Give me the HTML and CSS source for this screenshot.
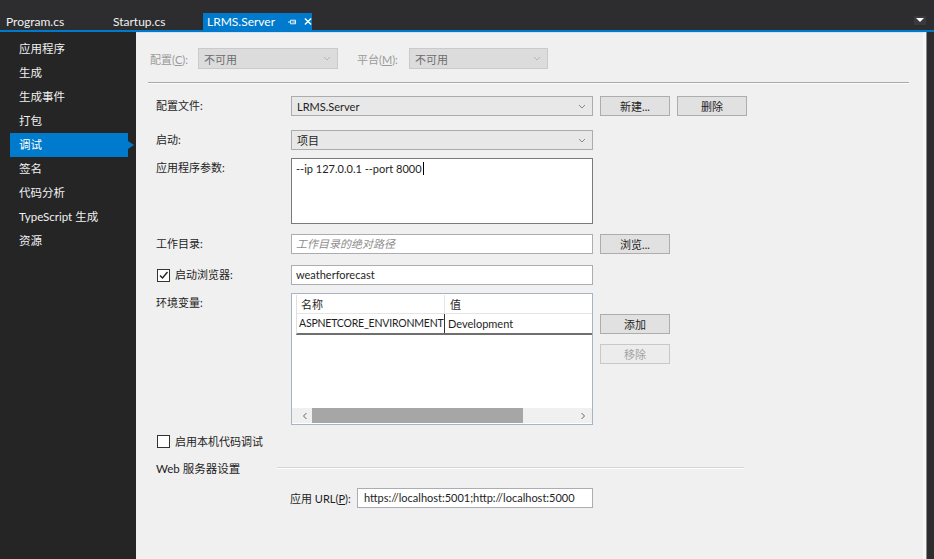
FILE: index.html
```html
<!DOCTYPE html>
<html lang="zh-CN">
<head>
  <meta charset="UTF-8" />
  <title>LRMS.Server</title>
  <link rel="stylesheet" href="styles.css">
</head>
<body>
  <div class="tabbar">
    <div class="tab tab-first">Program.cs</div>
    <div class="tab tab-second">Startup.cs</div>
    <div class="tab active">
      <span>LRMS.Server</span>
      <svg class="pin" width="10" height="8" viewBox="0 0 10 8"><path d="M0 4h3M3 1.5v5M3.5 2h5v4h-5M5 4h3.5" fill="none" stroke="#fff" stroke-width="1"/></svg>
      <svg class="close" width="9" height="9" viewBox="0 0 9 9"><path d="M1 1l7 7M8 1l-7 7" stroke="#fff" stroke-width="1.6"/></svg>
    </div>
    <div class="tab-menu">
      <svg width="10" height="7" viewBox="0 0 10 7"><path d="M1 2h8l-4 4z" fill="#fff"/></svg>
    </div>
  </div>

  <div class="main">
    <ul class="nav">
      <li>应用程序</li>
      <li>生成</li>
      <li>生成事件</li>
      <li>打包</li>
      <li class="selected">调试</li>
      <li>签名</li>
      <li>代码分析</li>
      <li>TypeScript 生成</li>
      <li>资源</li>
    </ul>

    <div class="panel">
      <div class="config-bar">
        <span class="dim-label">配置(<u>C</u>):</span>
        <div class="combo combo-off cfg-combo">不可用
          <svg width="8" height="5" viewBox="0 0 8 5"><path d="M1 1l3 3 3-3" fill="none" stroke="#b5b5b5"/></svg>
        </div>
        <span class="dim-label plat-label">平台(<u>M</u>):</span>
        <div class="combo combo-off plat-combo">不可用
          <svg width="8" height="5" viewBox="0 0 8 5"><path d="M1 1l3 3 3-3" fill="none" stroke="#b5b5b5"/></svg>
        </div>
      </div>
      <div class="rule"></div>

      <div class="form">
        <div class="row row-first">
          <label class="lbl">配置文件:</label>
          <div class="combo">LRMS.Server
            <svg width="8" height="5" viewBox="0 0 8 5"><path d="M1 1l3 3 3-3" fill="none" stroke="#888"/></svg>
          </div>
          <button class="btn">新建...</button>
          <button class="btn">删除</button>
        </div>

        <div class="row row-loose">
          <label class="lbl">启动:</label>
          <div class="combo">项目
            <svg width="8" height="5" viewBox="0 0 8 5"><path d="M1 1l3 3 3-3" fill="none" stroke="#888"/></svg>
          </div>
        </div>

        <div class="row">
          <label class="lbl">应用程序参数:</label>
          <div class="textarea">--ip 127.0.0.1 --port 8000<span class="caret"></span></div>
        </div>

        <div class="row row-mid">
          <label class="lbl">工作目录:</label>
          <div class="input placeholder">工作目录的绝对路径</div>
          <button class="btn">浏览...</button>
        </div>

        <div class="row row-mid2">
          <label class="lbl check-lbl">
            <span class="checkbox">
              <svg width="11" height="11" viewBox="0 0 11 11"><path d="M2 5.5l2.5 2.5 5-6" fill="none" stroke="#222" stroke-width="1.4"/></svg>
            </span>启动浏览器:</label>
          <div class="input">weatherforecast</div>
        </div>

        <div class="row">
          <label class="lbl">环境变量:</label>
          <div class="env">
            <div class="env-grid">
              <div class="env-head">名称</div>
              <div class="env-head env-head-last">值</div>
              <div class="env-cell env-key">ASPNETCORE_ENVIRONMENT</div>
              <div class="env-cell env-cell-last">Development</div>
            </div>
            <div class="hscroll">
              <svg width="6" height="8" viewBox="0 0 6 8"><path d="M4.5 1L1.5 4l3 3" fill="none" stroke="#666"/></svg>
              <div class="track"><div class="thumb"></div></div>
              <svg width="6" height="8" viewBox="0 0 6 8"><path d="M1.5 1l3 3-3 3" fill="none" stroke="#666"/></svg>
            </div>
          </div>
          <div class="env-actions">
            <button class="btn">添加</button>
            <button class="btn btn-off">移除</button>
          </div>
        </div>

        <div class="check-row">
          <span class="checkbox"></span>启用本机代码调试
        </div>

        <div class="group-title">
          <span class="group-name">Web 服务器设置</span>
          <div class="group-line"></div>
        </div>

        <div class="url-row">
          <label>应用 URL(<u>P</u>):</label>
          <div class="input url-input">https://localhost:5001;http://localhost:5000</div>
        </div>
      </div>
    </div>
    <div class="edge"></div>
  </div>
</body>
</html>
```

FILE: styles.css
```css
html, body {
  margin: 0; padding: 0;
  height: 100%;
  overflow: hidden;
}
* { box-sizing: border-box; }

body {
  background: #2d2d30;
  font-family: "Lato", "Noto Sans CJK SC", sans-serif;
  font-size: 11px;
  color: #1e1e1e;
}

/* tab strip */
.tabbar {
  display: flex;
  align-items: flex-end;
  height: 32px;
  border-bottom: 2px solid #007acc;
}
.tab {
  height: 17px;
  line-height: 17px;
  color: #f1f1f1;
  font-size: 12px;
  white-space: nowrap;
}
.tab-first { width: 105px; padding-left: 6px; }
.tab-second { width: 98px; padding-left: 8px; }
.tab.active {
  width: 109px;
  padding-left: 4px;
  background: #007acc;
  color: #fff;
  display: flex;
  align-items: center;
}
.tab.active .pin { margin-left: 13px; }
.tab.active .close { margin-left: 7px; }
.tab-menu {
  margin-left: auto;
  margin-right: 8px;
  margin-bottom: 5px;
  width: 12px;
  height: 9px;
  display: flex;
  justify-content: center;
  background: #3a3a3d;
}

/* body */
.main {
  display: flex;
  height: calc(100% - 32px);
}

.nav {
  width: 136px;
  margin: 0;
  padding: 5px 0 0;
  list-style: none;
  background: #252526;
  font-size: 11.5px;
}
.nav li {
  height: 24px;
  line-height: 24px;
  padding-left: 19px;
  color: #f1f1f1;
}
.nav li.selected {
  position: relative;
  margin-left: 10px;
  width: 118px;
  padding-left: 9px;
  background: #007acc;
  color: #fff;
}
.nav li.selected::after {
  content: "";
  position: absolute;
  right: -6px;
  top: 8px;
  border-left: 6px solid #007acc;
  border-top: 4px solid transparent;
  border-bottom: 4px solid transparent;
}

.panel {
  flex: 1;
  background: #f0f0f0;
  border-top: 1px solid #d2e4f4;
  border-right: 3px solid #f7f7f7;
}
.edge {
  width: 8px;
  background: #2d2d30;
  border-left: 1px solid #8a8a8a;
}

/* disabled config bar */
.config-bar {
  display: flex;
  align-items: center;
  height: 21px;
  margin-top: 15px;
  padding-left: 14px;
}
.dim-label {
  width: 48px;
  color: #9a9a9a;
}
.plat-label {
  width: 52px;
  margin-left: 19px;
}
.cfg-combo { width: 140px; height: 21px !important; }
.plat-combo { width: 139px; height: 21px !important; }

.rule {
  height: 2px;
  margin: 13px 14px 0 12px;
  border-top: 1px solid #a9a9a9;
  border-bottom: 1px solid #fcfcfc;
}

/* form */
.form {
  padding-left: 20px;
}
.row {
  display: grid;
  grid-template-columns: 128px 302px 70px 70px;
  column-gap: 7px;
  margin-top: 8px;
  align-items: start;
}
.row-first { margin-top: 12px; }
.row-loose { margin-top: 14px; }
.row-mid { margin-top: 10px; }
.row-mid2 { margin-top: 11px; }

.lbl {
  line-height: 20px;
  color: #1e1e1e;
}

.combo {
  display: flex;
  align-items: center;
  justify-content: space-between;
  height: 20px;
  padding: 0 6px 0 5px;
  border: 1px solid #acacac;
  background: #e8e8e8;
  color: #1e1e1e;
}
.combo-off {
  background: #dcdcdc;
  border-color: #cacaca;
  color: #6d6d6d;
}

.input {
  height: 20px;
  line-height: 18px;
  padding: 0 4px;
  border: 1px solid #abadb3;
  background: #fff;
  white-space: nowrap;
  overflow: hidden;
}
.placeholder {
  color: #8d8d8d;
  font-style: italic;
}
.textarea {
  height: 66px;
  padding: 1px 4px;
  line-height: 18px;
  border: 1px solid #7a7a7a;
  background: #fff;
}
.caret {
  display: inline-block;
  width: 1px;
  height: 13px;
  margin-left: 1px;
  vertical-align: -2px;
  background: #000;
}

.btn {
  height: 20px;
  padding: 0;
  border: 1px solid #adadad;
  background: #e1e1e1;
  font: inherit;
  color: #1e1e1e;
}
.btn-off {
  background: #ececec;
  border-color: #c8c8c8;
  color: #a2a2a2;
}

.check-lbl {
  display: flex;
  align-items: center;
  margin-left: 1px;
}
.checkbox {
  display: inline-flex;
  align-items: center;
  justify-content: center;
  width: 13px;
  height: 13px;
  margin-right: 5px;
  border: 1px solid #333;
  background: #fff;
}

/* environment variables */
.env {
  display: flex;
  flex-direction: column;
  height: 132px;
  border: 1px solid #a8b4c3;
  background: #fff;
}
.env-grid {
  display: grid;
  grid-template-columns: 148px 1fr;
  margin: 1px 0 0 4px;
  border-left: 1px solid #e0e0e0;
  border-bottom: 2px solid #6f6f6f;
}
.env-head {
  height: 19px;
  line-height: 19px;
  padding-left: 4px;
  border-right: 1px solid #e5e5e5;
  border-bottom: 1px solid #e5e5e5;
}
.env-head-last { border-right: none; padding-left: 5px; }
.env-cell {
  height: 19px;
  line-height: 19px;
  padding-left: 3px;
  border-right: 1px solid #333;
  white-space: nowrap;
  overflow: hidden;
}
.env-key {
  padding-left: 2px;
  font-size: 10.5px;
  letter-spacing: -0.2px;
}
.env-cell-last { border-right: none; padding-left: 3px; }

.hscroll {
  display: flex;
  align-items: center;
  height: 15px;
  margin-top: auto;
  margin-bottom: 1px;
  padding: 0 6px 0 10px;
  background: #f0f0f0;
}
.track {
  flex: 1;
  height: 15px;
  margin: 0 56px 0 4px;
}
.thumb {
  width: 211px;
  height: 15px;
  background: #a6a6a6;
}

.env-actions {
  display: flex;
  flex-direction: column;
  gap: 10px;
  padding-top: 21px;
}

.check-row {
  display: flex;
  align-items: center;
  height: 20px;
  margin-top: 6px;
  margin-left: 1px;
}

.group-title {
  display: flex;
  align-items: center;
  width: 588px;
  height: 20px;
  margin-top: 7px;
}
.group-name {
  width: 121px;
  font-size: 11.5px;
}
.group-line {
  flex: 1;
  height: 2px;
  border-top: 1px solid #d5d5d5;
  border-bottom: 1px solid #fff;
}

.url-row {
  display: flex;
  align-items: center;
  margin-top: 10px;
  padding-left: 134px;
}
.url-row label { width: 67px; }
.url-input { width: 236px; padding-left: 6px; }
```
